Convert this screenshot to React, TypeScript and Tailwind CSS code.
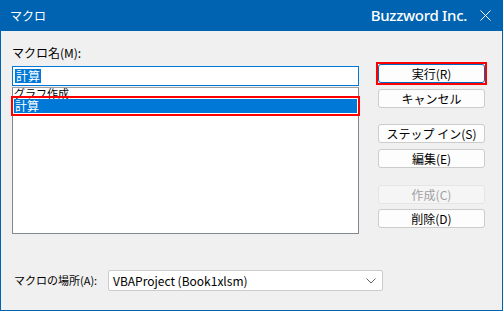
import React from "react";

const jp = { fontFamily: '"Noto Sans CJK JP", "Noto Sans", sans-serif' };

function Btn({ label, className = "", disabled = false, primary = false }: { label: string; className?: string; disabled?: boolean; primary?: boolean }) {
  return (
    <div
      className={
        "relative h-[19px] w-[107px] rounded-[3px] border flex items-center justify-center text-[12px] leading-none " +
        (disabled
          ? "bg-[#f5f5f5] border-[#e5e5e5] text-[#a0a0a0] "
          : primary
          ? "bg-[#fdfdfd] border-[#0067c0] text-black "
          : "bg-[#fdfdfd] border-[#cccccc] text-black ") +
        className
      }
    >
      {label}
      {primary && <span className="absolute -left-[3px] -right-[3px] -top-[3px] -bottom-[3px] border-2 border-[#ff0000]" />}
    </div>
  );
}

export default function App() {
  return (
    <div className="w-[503px] h-[311px] bg-[#f0f0f0] border border-t-0 border-[#0063b1] flex flex-col overflow-hidden" style={jp}>
      <div className="h-[31px] bg-[#0063b1] flex items-center text-white shrink-0 -mx-px">
        <span className="ml-[10px] text-[12px]">マクロ</span>
        <span className="ml-auto text-[15px] font-medium tracking-[-0.02em]" style={{ fontFamily: '"Noto Sans", "Open Sans", sans-serif' }}>Buzzword Inc.</span>
        <svg className="ml-[13px] mr-[12px]" width="11" height="11" viewBox="0 0 11 11">
          <path d="M0.5 0.5 L10.5 10.5 M10.5 0.5 L0.5 10.5" stroke="white" strokeWidth="1" fill="none" />
        </svg>
      </div>
      <div className="flex pl-[11px]">
        <div className="w-[347px] pt-[14px]">
          <div className="h-[16px] text-[12px] leading-[16px] text-black">マクロ名(M):</div>
          <div className="mt-[5px] h-[20px] bg-white border border-[#0078d7] flex items-center pl-[2px]">
            <span className="bg-[#0078d7] text-white text-[12px] leading-[14px] px-px">計算</span>
          </div>
          <div className="mt-px h-[147px] bg-white border border-[#828790] border-t-[#a0a0a0]">
            <div className="h-[11px] text-[11px] leading-[11px] pl-[1px] text-black">グラフ作成</div>
            <div className="relative h-[14px] bg-[#0078d7] text-white text-[12px] leading-[14px] pl-[1px] mx-px">
              計算
              <span className="absolute -left-[3px] -right-[3px] -top-[3px] -bottom-[3px] border-2 border-[#ff0000]" />
            </div>
          </div>
        </div>
        <div className="ml-[19px] pt-[33px] flex flex-col">
          <Btn label="実行(R)" primary />
          <Btn label="キャンセル" className="mt-[6px]" />
          <Btn label="ステップ イン(S)" className="mt-[16px]" />
          <Btn label="編集(E)" className="mt-[6px]" />
          <Btn label="作成(C)" disabled className="mt-[17px]" />
          <Btn label="削除(D)" className="mt-[5px]" />
        </div>
      </div>
      <div className="flex items-center mt-[36px] pl-[13px]">
        <span className="text-[11px] w-[94px] text-black">マクロの場所(A):</span>
        <div className="h-[21px] w-[275px] bg-white border border-[#cccccc] rounded-[2px] flex items-center pl-[4px] text-[12px] text-black">
          <span>VBAProject (Book1xlsm)</span>
          <svg className="ml-auto mr-[6px]" width="10" height="6" viewBox="0 0 10 6">
            <path d="M0.5 0.5 L5 5 L9.5 0.5" stroke="#606060" strokeWidth="1" fill="none" />
          </svg>
        </div>
      </div>
    </div>
  );
}
